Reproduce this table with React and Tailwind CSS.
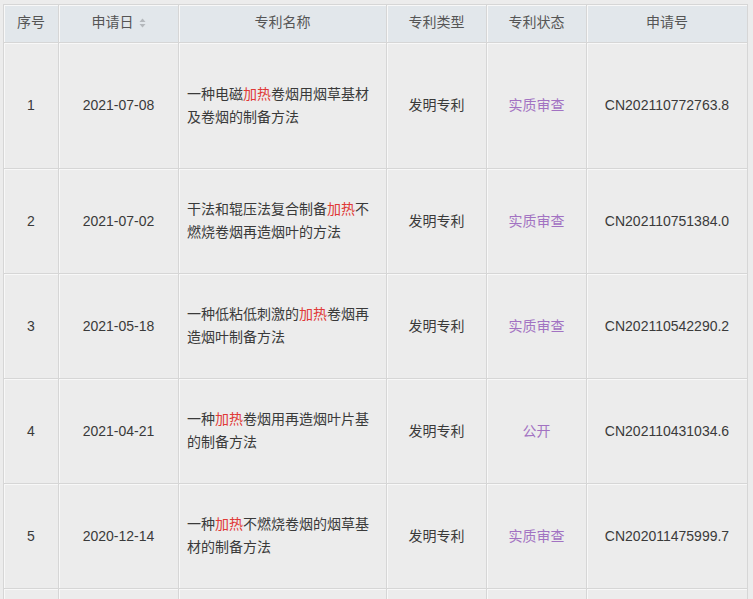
import React from "react";

const rows = [
  { no: "1", date: "2021-07-08", name: ["一种电磁", "加热", "卷烟用烟草基材及卷烟的制备方法"], type: "发明专利", status: "实质审查", app: "CN202110772763.8", h: "h-[126px]" },
  { no: "2", date: "2021-07-02", name: ["干法和辊压法复合制备", "加热", "不燃烧卷烟再造烟叶的方法"], type: "发明专利", status: "实质审查", app: "CN202110751384.0", h: "h-[105px]" },
  { no: "3", date: "2021-05-18", name: ["一种低粘低刺激的", "加热", "卷烟再造烟叶制备方法"], type: "发明专利", status: "实质审查", app: "CN202110542290.2", h: "h-[105px]" },
  { no: "4", date: "2021-04-21", name: ["一种", "加热", "卷烟用再造烟叶片基的制备方法"], type: "发明专利", status: "公开", app: "CN202110431034.6", h: "h-[105px]" },
  { no: "5", date: "2020-12-14", name: ["一种", "加热", "不燃烧卷烟的烟草基材的制备方法"], type: "发明专利", status: "实质审查", app: "CN202011475999.7", h: "h-[105px]" },
];

const cell = "border-r border-b border-[#d6d6d6] shadow-[inset_1px_1px_0_#f8f8f8] flex items-center";

function SortIcon() {
  return (
    <svg width="7" height="10" viewBox="0 0 7 10" className="ml-[5px] mt-[1px]">
      <path d="M3.5 0.5 L6.5 4 L0.5 4 Z" fill="#b4b8bc" />
      <path d="M3.5 9.5 L6.5 6 L0.5 6 Z" fill="#b4b8bc" />
    </svg>
  );
}

export default function App() {
  const cols = "grid grid-cols-[55px_120px_208px_100px_100px_161px]";
  return (
    <div
      className="w-[753px] h-[599px] overflow-hidden bg-[#ececec] pl-[3px] pt-[4px] text-[14px] text-[#3a3a3a]"
      style={{ fontFamily: '"Liberation Sans", "Noto Sans CJK SC", sans-serif' }}
    >
      <div className="w-[745px] border-l border-t border-[#d6d6d6]">
        <div className={`${cols} h-[38px] bg-[#e2e7eb] text-[#555]`}>
          <div className={`${cell} justify-center pb-[2px]`}>序号</div>
          <div className={`${cell} justify-center pb-[2px]`}>
            申请日
            <SortIcon />
          </div>
          <div className={`${cell} justify-center pb-[2px]`}>专利名称</div>
          <div className={`${cell} justify-center pb-[2px]`}>专利类型</div>
          <div className={`${cell} justify-center pb-[2px]`}>专利状态</div>
          <div className={`${cell} justify-center pb-[2px]`}>申请号</div>
        </div>
        {rows.map((r) => (
          <div key={r.no} className={`${cols} ${r.h}`}>
            <div className={`${cell} justify-center`}>{r.no}</div>
            <div className={`${cell} justify-center`}>{r.date}</div>
            <div className={`${cell} pl-[8px] pr-[6px]`}>
              <div className="leading-[23px]">
                {r.name[0]}
                <span className="text-[#e03a36]">{r.name[1]}</span>
                {r.name[2]}
              </div>
            </div>
            <div className={`${cell} justify-center`}>{r.type}</div>
            <div className={`${cell} justify-center text-[#a272c2]`}>{r.status}</div>
            <div className={`${cell} justify-center`}>{r.app}</div>
          </div>
        ))}
        <div className={`${cols} h-[105px]`}>
          <div className={cell}></div>
          <div className={cell}></div>
          <div className={cell}></div>
          <div className={cell}></div>
          <div className={cell}></div>
          <div className={cell}></div>
        </div>
      </div>
    </div>
  );
}
